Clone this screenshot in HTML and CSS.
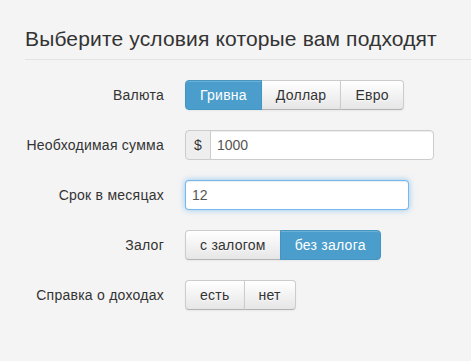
FILE: index.html
```html
<!DOCTYPE html>
<html>
  <head>
    <meta charset="utf-8">
    <link rel="stylesheet" href="styles.css">
  </head>
  <body>
    <form class="form-horizontal">
      <legend>Выберите условия которые вам подходят</legend>

      <div class="control-group">
        <label class="control-label">Валюта</label>
        <div class="controls">
          <div class="btn-group">
            <button type="button" class="btn active">Гривна</button>
            <button type="button" class="btn">Доллар</button>
            <button type="button" class="btn">Евро</button>
          </div>
        </div>
      </div>

      <div class="control-group">
        <label class="control-label" for="amount">Необходимая сумма</label>
        <div class="controls">
          <div class="input-prepend">
            <span class="add-on">$</span>
            <input type="text" id="amount" value="1000" />
          </div>
        </div>
      </div>

      <div class="control-group">
        <label class="control-label" for="months">Срок в месяцах</label>
        <div class="controls">
          <input type="text" id="months" class="focused" value="12" autofocus />
        </div>
      </div>

      <div class="control-group">
        <label class="control-label">Залог</label>
        <div class="controls">
          <div class="btn-group">
            <button type="button" class="btn">с залогом</button>
            <button type="button" class="btn active">без залога</button>
          </div>
        </div>
      </div>

      <div class="control-group">
        <label class="control-label">Справка о доходах</label>
        <div class="controls">
          <div class="btn-group">
            <button type="button" class="btn">есть</button>
            <button type="button" class="btn">нет</button>
          </div>
        </div>
      </div>
    </form>
  </body>
</html>
```

FILE: styles.css
```css
/* page */
body {
  margin: 0;
  font-family: "Liberation Sans", Arial, sans-serif;
  font-size: 14px;
  line-height: 20px;
  letter-spacing: 0.25px;
  color: #333;
  background-color: #f4f4f4;
}

.form-horizontal {
  padding-top: 19px;
}

legend {
  display: block;
  margin: 0 0 20px 25px;
  padding: 0;
  font-size: 21px;
  line-height: 40px;
  letter-spacing: 0.15px;
  color: #333;
  border-bottom: 1px solid #e3e3e3;
  width: calc(100% - 25px);
}

.control-group {
  display: grid;
  grid-template-columns: 164px 1fr;
  column-gap: 21px;
  margin-bottom: 20px;
}

.control-label {
  padding-top: 5px;
  text-align: right;
}

/* buttons */
.btn-group {
  display: inline-flex;
}

.btn {
  padding: 4px 14px;
  font-family: inherit;
  font-size: 14px;
  line-height: 20px;
  letter-spacing: 0.25px;
  color: #333;
  text-shadow: 0 1px 1px rgba(255, 255, 255, 0.75);
  background-color: #f5f5f5;
  background-image: linear-gradient(to bottom, #ffffff, #e6e6e6);
  border: 1px solid #cccccc;
  border-bottom-color: #b3b3b3;
  border-radius: 0;
  box-shadow: inset 0 1px 0 rgba(255, 255, 255, 0.2), 0 1px 2px rgba(0, 0, 0, 0.05);
  cursor: pointer;
}

.btn + .btn {
  margin-left: -1px;
}

.btn:first-child {
  border-radius: 4px 0 0 4px;
}

.btn:last-child {
  border-radius: 0 4px 4px 0;
}

.btn.active {
  color: #fff;
  text-shadow: none;
  background-color: #4b9dcb;
  background-image: none;
  border-color: #4395c4;
  position: relative;
}

/* inputs */
input[type="text"] {
  box-sizing: border-box;
  width: 224px;
  height: 30px;
  padding: 4px 6px;
  font-family: inherit;
  font-size: 14px;
  line-height: 20px;
  color: #555;
  background-color: #fff;
  border: 1px solid #ccc;
  border-radius: 4px;
  box-shadow: inset 0 1px 1px rgba(0, 0, 0, 0.075);
  outline: none;
}

input.focused {
  border-color: rgba(82, 168, 236, 0.8);
  box-shadow: inset 0 1px 1px rgba(0, 0, 0, 0.075), 0 0 6px rgba(82, 168, 236, 0.6);
}

.input-prepend {
  display: flex;
}

.add-on {
  box-sizing: border-box;
  width: 26px;
  height: 30px;
  padding: 4px 5px;
  text-align: center;
  background-color: #eee;
  border: 1px solid #ccc;
  border-radius: 4px 0 0 4px;
  text-shadow: 0 1px 0 #fff;
}

.input-prepend input[type="text"] {
  margin-left: -1px;
  border-radius: 0 4px 4px 0;
}
```
